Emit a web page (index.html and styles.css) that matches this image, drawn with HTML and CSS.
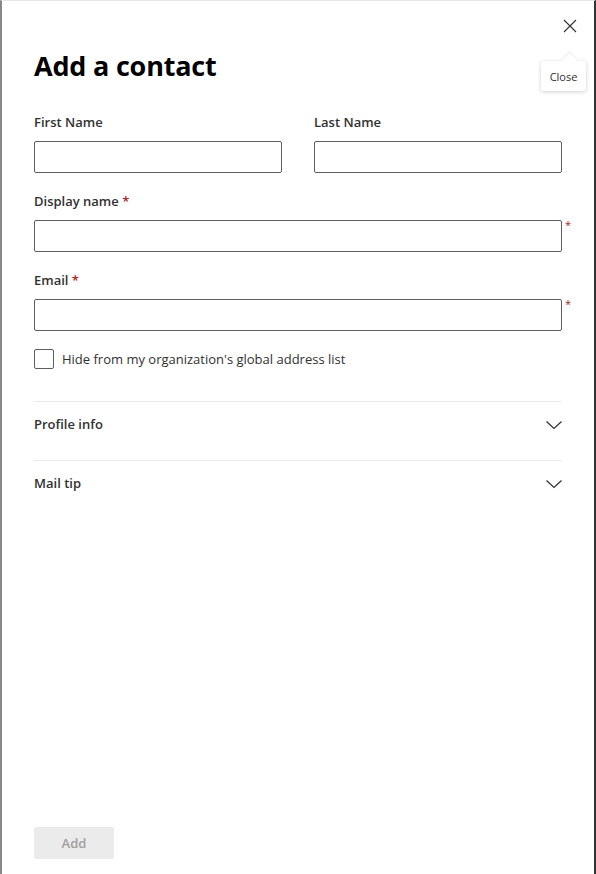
FILE: index.html
```html
<!DOCTYPE html>
<html>
<head>
<meta charset="utf-8">
<link rel="stylesheet" href="styles.css">
</head>
<body>
<div class="panel">
  <button class="close" aria-label="Close">
    <svg width="14" height="14" viewBox="0 0 14 14"><path d="M1 1L13 13M13 1L1 13" stroke="#323130" stroke-width="1.1" fill="none"/></svg>
  </button>
  <div class="tooltip">Close</div>
  <div class="content">
    <h1 class="title">Add a contact</h1>
    <div class="row two">
      <div class="field">
        <label class="label">First Name</label>
        <div class="inputwrap"><input class="input" type="text"></div>
      </div>
      <div class="field">
        <label class="label">Last Name</label>
        <div class="inputwrap"><input class="input" type="text"></div>
      </div>
    </div>
    <div class="row">
      <div class="field">
        <label class="label">Display name <span class="req">*</span></label>
        <div class="inputwrap"><input class="input" type="text"><span class="req-side">*</span></div>
      </div>
    </div>
    <div class="row">
      <div class="field">
        <label class="label">Email <span class="req">*</span></label>
        <div class="inputwrap"><input class="input" type="text"><span class="req-side">*</span></div>
      </div>
    </div>
    <label class="check"><span class="box"></span><span class="checktext">Hide from my organization's global address list</span></label>
    <div class="sections">
      <div class="section"><span>Profile info</span>
        <svg class="chev" width="16" height="10" viewBox="0 0 16 10"><path d="M0.5 1.5L8 8.5L15.5 1.5" stroke="#323130" stroke-width="1.2" fill="none"/></svg>
      </div>
      <div class="section"><span>Mail tip</span>
        <svg class="chev" width="16" height="10" viewBox="0 0 16 10"><path d="M0.5 1.5L8 8.5L15.5 1.5" stroke="#323130" stroke-width="1.2" fill="none"/></svg>
      </div>
    </div>
  </div>
  <div class="footer">
    <button class="add" disabled>Add</button>
  </div>
</div>
</body>
</html>
```
FILE: styles.css
```css
html, body {
  margin: 0;
  padding: 0;
  height: 100%;
}
body {
  font-family: "Open Sans", "Noto Sans", sans-serif;
  color: #323130;
  background: #fff;
}
.panel {
  position: relative;
  box-sizing: border-box;
  height: 874px;
  width: 596px;
  border-left: 2px solid #8a8886;
  border-right: 2px solid #333;
  border-top: 1px solid #e8e8e8;
  display: flex;
  flex-direction: column;
  background: #fff;
}
.close {
  position: absolute;
  top: 17px;
  right: 16px;
  width: 16px;
  height: 16px;
  padding: 0;
  border: 0;
  background: none;
  display: flex;
  align-items: center;
  justify-content: center;
}
.tooltip {
  position: absolute;
  top: 60px;
  right: 8px;
  width: 45px;
  height: 30px;
  box-sizing: border-box;
  background: #fff;
  font-size: 11px;
  color: #323130;
  display: flex;
  align-items: center;
  justify-content: center;
  box-shadow: 0 1px 4px rgba(0,0,0,0.18), 0 0 1px rgba(0,0,0,0.1);
  border-radius: 2px;
}
.tooltip::before {
  content: "";
  position: absolute;
  top: -6px;
  left: 23px;
  width: 11px;
  height: 11px;
  background: #fff;
  transform: rotate(45deg);
  box-shadow: -1px -1px 2px rgba(0,0,0,0.08);
}
.content {
  padding: 0 32px 0 32px;
  display: flex;
  flex-direction: column;
}
.title {
  margin: 46px 0 0 0;
  font-size: 27px;
  line-height: 38px;
  font-weight: 700;
  color: #000;
  letter-spacing: -0.2px;
}
.row {
  display: flex;
  gap: 32px;
  margin-top: 18px;
}
.row.two { margin-top: 27px; }
.field {
  flex: 1;
  display: flex;
  flex-direction: column;
}
.label {
  font-size: 13px;
  font-weight: 560;
  line-height: 20px;
  color: #323130;
  margin-bottom: 9px;
}
.req { color: #a4262c; }
.inputwrap {
  position: relative;
  display: flex;
}
.input {
  flex: 1;
  box-sizing: border-box;
  height: 32px;
  margin: 0;
  border: 1px solid #605e5c;
  border-radius: 2px;
  background: #fff;
  font: inherit;
}
.req-side {
  position: absolute;
  right: -9px;
  top: -3px;
  color: #a4262c;
  font-size: 11px;
}
.check {
  display: flex;
  align-items: center;
  gap: 8px;
  margin-top: 18px;
  font-size: 13px;
  color: #323130;
}
.box {
  width: 20px;
  height: 20px;
  box-sizing: border-box;
  border: 1px solid #605e5c;
  border-radius: 2px;
}
.sections {
  margin-top: 32px;
}
.section {
  border-top: 1px solid #edebe9;
  height: 59px;
  display: flex;
  align-items: flex-start;
  justify-content: space-between;
  font-size: 13px;
  font-weight: 560;
  color: #323130;
  padding-top: 12px;
  box-sizing: border-box;
  line-height: 20px;
}
.chev { margin-top: 6px; }
.footer {
  margin-top: auto;
  padding: 0 32px 15px 32px;
}
.add {
  width: 80px;
  height: 32px;
  border: 0;
  border-radius: 2px;
  background: #ebebeb;
  color: #a19f9d;
  font-family: inherit;
  font-size: 13px;
  font-weight: 600;
}
```
